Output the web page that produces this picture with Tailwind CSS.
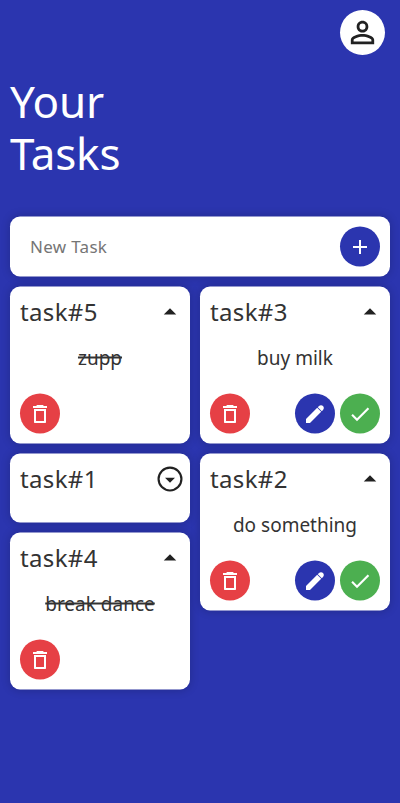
<!DOCTYPE html>
<html lang="en">
<head>
<meta charset="utf-8">
<title>Your Tasks</title>
<script src="https://cdn.jsdelivr.net/npm/@tailwindcss/browser@4"></script>
</head>
<body class="min-h-screen bg-[#2b35af] font-['Noto_Sans','Open_Sans',sans-serif] text-[#333]">
<svg class="hidden">
  <symbol id="trash" viewBox="0 0 24 24"><path fill-rule="evenodd" d="M9 3h6l.8 1H19v2H5V4h3.200zM6 7h12v13.300q0 .7-.7.7H6.700q-.7 0-.7-.7zM8 9v10h8V9z"/></symbol>
  <symbol id="pencil" viewBox="0 0 24 24"><path d="M3 17L14.200 5.800l4 4L7 21H3zM14.800 5.200L16 4c1.100-1.100 2.900-1.100 4 0s1.100 2.900 0 4l-1.200 1.200z"/></symbol>
  <symbol id="check" viewBox="0 0 24 24"><path d="M9 16.200L4.800 12l-1.500 1.500L9 19.200 21.200 7l-1.500-1.500z"/></symbol>
  <symbol id="up" viewBox="0 0 24 24"><path d="M7 14l5-5 5 5z"/></symbol>
</svg>
<header class="flex justify-end pt-2.5 pr-[15px]">
  <button class="flex size-[45px] items-center justify-center rounded-full bg-white">
    <svg class="size-[35px] fill-[#212121]" viewBox="0 0 24 24"><path d="M12 5.900a2.100 2.100 0 110 4.200 2.100 2.100 0 010-4.200m0 9c2.970 0 6.100 1.460 6.100 2.100v1.100H5.900V17c0-.64 3.130-2.100 6.100-2.100M12 4C9.790 4 8 5.790 8 8s1.790 4 4 4 4-1.790 4-4-1.790-4-4-4zm0 9c-2.670 0-8 1.340-8 4v3h16v-3c0-2.660-5.330-4-8-4z"/></svg>
  </button>
</header>
<main class="px-2.5">
  <h1 class="mt-5 h-[104px] text-[44px] leading-[52px] tracking-[-0.2px] text-white">Your<br>Tasks</h1>
  <section class="mt-[37px] translate-y-[0.5px] [&_svg]:translate-y-[0.5px]">
  <form class="flex h-[60px] items-center justify-between rounded-[10px] bg-white pr-2.5 pl-5 shadow-[0_0_10px_rgba(0,0,0,0.2)]">
    <span class="text-[17px] tracking-[0.3px] text-[#757575]">New Task</span>
    <button type="button" class="flex size-10 items-center justify-center rounded-full bg-[#2b35af]"><svg class="size-6 fill-white" viewBox="0 0 24 24"><path d="M19 13h-6v6h-2v-6H5v-2h6V5h2v6h6v2z"/></svg></button>
  </form>
  <div class="mt-2.5 grid grid-cols-[180px_190px] items-start gap-2.5">
    <div class="flex flex-col gap-2.5">
      <article class="flex h-[157px] flex-col rounded-[10px] bg-white p-2.5 shadow-[0_0_10px_rgba(0,0,0,0.2)]">
        <div class="-mr-[5px] flex h-[30px] items-center justify-between"><h2 class="text-[24px] leading-[30px] tracking-[0.35px]">task#5</h2><svg class="size-[30px] fill-[#212121]"><use href="#up"/></svg></div>
        <p class="mt-4 h-[30px] text-center text-[19px] leading-[30px] line-through decoration-[1.5px]">zupp</p>
        <div class="mt-auto flex"><button class="flex size-10 items-center justify-center rounded-full bg-[#e64045]"><svg class="size-6 fill-white"><use href="#trash"/></svg></button></div>
      </article>
      <article class="h-[69px] rounded-[10px] bg-white p-2.5 shadow-[0_0_10px_rgba(0,0,0,0.2)]">
        <div class="-mr-[5px] flex h-[30px] items-center justify-between"><h2 class="text-[24px] leading-[30px] tracking-[0.35px]">task#1</h2><svg class="size-[30px] fill-[#212121]" viewBox="0 0 24 24"><path d="M12 3.700a8.300 8.300 0 110 16.600 8.300 8.300 0 010-16.600M12 2a10 10 0 100 20 10 10 0 000-20zm0 13l-4-4h8z"/></svg></div>
      </article>
      <article class="flex h-[157px] flex-col rounded-[10px] bg-white p-2.5 shadow-[0_0_10px_rgba(0,0,0,0.2)]">
        <div class="-mr-[5px] flex h-[30px] items-center justify-between"><h2 class="text-[24px] leading-[30px] tracking-[0.35px]">task#4</h2><svg class="size-[30px] fill-[#212121]"><use href="#up"/></svg></div>
        <p class="mt-4 h-[30px] text-center text-[19px] leading-[30px] line-through decoration-[1.5px]">break dance</p>
        <div class="mt-auto flex"><button class="flex size-10 items-center justify-center rounded-full bg-[#e64045]"><svg class="size-6 fill-white"><use href="#trash"/></svg></button></div>
      </article>
    </div>
    <div class="flex flex-col gap-2.5">
      <article class="flex h-[157px] flex-col rounded-[10px] bg-white p-2.5 shadow-[0_0_10px_rgba(0,0,0,0.2)]">
        <div class="-mr-[5px] flex h-[30px] items-center justify-between"><h2 class="text-[24px] leading-[30px] tracking-[0.35px]">task#3</h2><svg class="size-[30px] fill-[#212121]"><use href="#up"/></svg></div>
        <p class="mt-4 h-[30px] text-center text-[19px] leading-[30px]">buy milk</p>
        <div class="mt-auto flex gap-[5px]">
          <button class="mr-auto flex size-10 items-center justify-center rounded-full bg-[#e64045]"><svg class="size-6 fill-white"><use href="#trash"/></svg></button>
          <button class="flex size-10 items-center justify-center rounded-full bg-[#2b35af]"><svg class="size-6 fill-white"><use href="#pencil"/></svg></button>
          <button class="flex size-10 items-center justify-center rounded-full bg-[#4caf50]"><svg class="size-6 fill-white"><use href="#check"/></svg></button>
        </div>
      </article>
      <article class="flex h-[157px] flex-col rounded-[10px] bg-white p-2.5 shadow-[0_0_10px_rgba(0,0,0,0.2)]">
        <div class="-mr-[5px] flex h-[30px] items-center justify-between"><h2 class="text-[24px] leading-[30px] tracking-[0.35px]">task#2</h2><svg class="size-[30px] fill-[#212121]"><use href="#up"/></svg></div>
        <p class="mt-4 h-[30px] text-center text-[19px] leading-[30px]">do something</p>
        <div class="mt-auto flex gap-[5px]">
          <button class="mr-auto flex size-10 items-center justify-center rounded-full bg-[#e64045]"><svg class="size-6 fill-white"><use href="#trash"/></svg></button>
          <button class="flex size-10 items-center justify-center rounded-full bg-[#2b35af]"><svg class="size-6 fill-white"><use href="#pencil"/></svg></button>
          <button class="flex size-10 items-center justify-center rounded-full bg-[#4caf50]"><svg class="size-6 fill-white"><use href="#check"/></svg></button>
        </div>
      </article>
    </div>
  </div>
  </section>
</main>
</body>
</html>
